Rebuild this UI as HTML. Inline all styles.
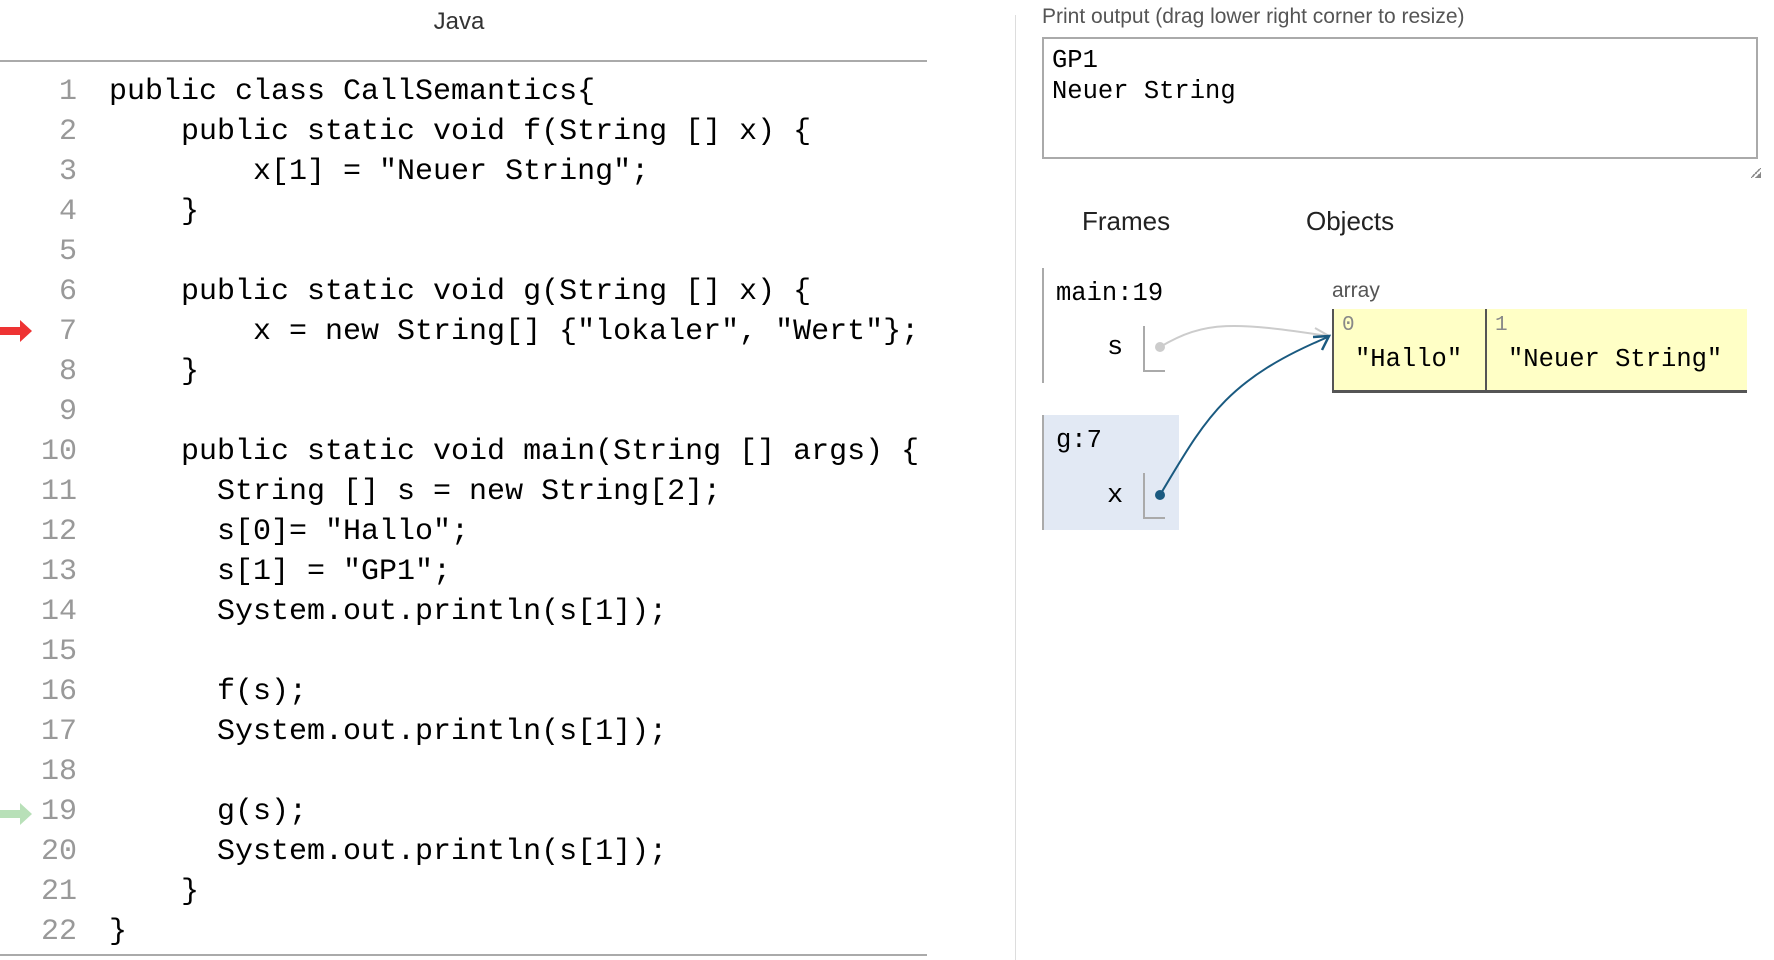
<!DOCTYPE html>
<html><head><meta charset="utf-8"><style>
body{margin:0;width:1774px;height:960px;background:#fff;position:relative;overflow:hidden;font-family:"Liberation Sans",sans-serif}
.a{position:absolute}
.code{position:absolute;left:0;top:72px;width:927px;font-family:"Liberation Mono",monospace;font-size:30px}
.ln{height:40px;line-height:40px;white-space:pre;position:relative}
.ln .n{position:absolute;left:17px;color:#999;width:60px;text-align:right}
.ln .t{position:absolute;left:109px;color:#000}
.mono{font-family:"Liberation Mono",monospace}
#r{position:absolute;left:-10px;top:0;width:1774px;height:960px}
</style></head><body>
<div class="a" style="left:0;width:918px;top:8px;text-align:center;font-size:24px;color:#333">Java</div>
<div class="a" style="left:0;top:60px;width:927px;height:2px;background:#aaa"></div>
<div class="a" style="left:0;top:954px;width:927px;height:2px;background:#aaa"></div>
<div class="a" style="left:1015px;top:15px;width:1px;height:945px;background:#ddd"></div>
<div class="code">
<div class="ln"><span class="n">1</span><span class="t">public class CallSemantics{</span></div>
<div class="ln"><span class="n">2</span><span class="t">    public static void f(String [] x) {</span></div>
<div class="ln"><span class="n">3</span><span class="t">        x[1] = "Neuer String";</span></div>
<div class="ln"><span class="n">4</span><span class="t">    }</span></div>
<div class="ln"><span class="n">5</span><span class="t"></span></div>
<div class="ln"><span class="n">6</span><span class="t">    public static void g(String [] x) {</span></div>
<div class="ln"><span class="n">7</span><span class="t">        x = new String[] {"lokaler", "Wert"};</span></div>
<div class="ln"><span class="n">8</span><span class="t">    }</span></div>
<div class="ln"><span class="n">9</span><span class="t"></span></div>
<div class="ln"><span class="n">10</span><span class="t">    public static void main(String [] args) {</span></div>
<div class="ln"><span class="n">11</span><span class="t">      String [] s = new String[2];</span></div>
<div class="ln"><span class="n">12</span><span class="t">      s[0]= "Hallo";</span></div>
<div class="ln"><span class="n">13</span><span class="t">      s[1] = "GP1";</span></div>
<div class="ln"><span class="n">14</span><span class="t">      System.out.println(s[1]);</span></div>
<div class="ln"><span class="n">15</span><span class="t"></span></div>
<div class="ln"><span class="n">16</span><span class="t">      f(s);</span></div>
<div class="ln"><span class="n">17</span><span class="t">      System.out.println(s[1]);</span></div>
<div class="ln"><span class="n">18</span><span class="t"></span></div>
<div class="ln"><span class="n">19</span><span class="t">      g(s);</span></div>
<div class="ln"><span class="n">20</span><span class="t">      System.out.println(s[1]);</span></div>
<div class="ln"><span class="n">21</span><span class="t">    }</span></div>
<div class="ln"><span class="n">22</span><span class="t">}</span></div>
</div>
<svg class="a" style="left:0;top:0" width="40" height="960">
<path d="M0 327h20v-7l12 11-12 11v-7H0z" fill="#e33"/>
<path d="M0 810h20v-7l12 11-12 11v-7H0z" fill="#b8e0b8"/>
</svg>
<div id="r">
<div class="a" style="left:1052px;top:5px;font-size:21px;color:#555">Print output (drag lower right corner to resize)</div>
<div class="a mono" style="left:1052px;top:37px;width:716px;height:122px;border:2px solid #aaa;font-size:25.5px;line-height:31px;padding:6px 0 0 8px;box-sizing:border-box">GP1<br>Neuer String</div>
<div class="a" style="left:1761px;top:168px;width:10px;height:10px;background:linear-gradient(135deg,transparent 45%,#888 45%,#888 55%,transparent 55%,transparent 70%,#888 70%)"></div>
<div class="a" style="left:1092px;top:206px;font-size:26px;color:#222">Frames</div>
<div class="a" style="left:1316px;top:206px;font-size:26px;color:#222">Objects</div>
<div class="a" style="left:1052px;top:268px;width:2px;height:115px;background:#aaa"></div>
<div class="a mono" style="left:1066px;top:279px;font-size:25.5px">main:19</div>
<div class="a mono" style="left:1117px;top:333px;font-size:27px">s</div>
<div class="a" style="left:1153px;top:326px;width:20px;height:44px;border-left:2px solid #aaa;border-bottom:2px solid #aaa"></div>
<div class="a" style="left:1052px;top:415px;width:137px;height:115px;background:#e2e9f4;border-left:2px solid #aaa;box-sizing:border-box"></div>
<div class="a mono" style="left:1066px;top:426px;font-size:25.5px">g:7</div>
<div class="a mono" style="left:1117px;top:481px;font-size:27px">x</div>
<div class="a" style="left:1153px;top:473px;width:20px;height:44px;border-left:2px solid #aaa;border-bottom:2px solid #aaa"></div>
<div class="a" style="left:1342px;top:279px;font-size:21px;color:#555">array</div>
<div class="a" style="left:1342px;top:309px;width:415px;height:84px;background:#ffffc6;border-left:2px solid #555;border-bottom:3px solid #555;box-sizing:border-box"></div>
<div class="a" style="left:1495px;top:309px;width:2px;height:84px;background:#555"></div>
<div class="a mono" style="left:1352px;top:314px;font-size:21px;color:#888">0</div>
<div class="a mono" style="left:1505px;top:314px;font-size:21px;color:#888">1</div>
<div class="a mono" style="left:1365px;top:345px;font-size:25.5px">"Hallo"</div>
<div class="a mono" style="left:1518px;top:345px;font-size:25.5px">"Neuer String"</div>
<svg class="a" style="left:5px;top:0" width="1774" height="960">
<path d="M1165 347 C1210 320 1240 322 1333 336" stroke="#ccc" stroke-width="2" fill="none"/>
<path d="M1320 328 L1334 336 L1320 343" stroke="#ccc" stroke-width="2" fill="none"/>
<circle cx="1165" cy="347" r="5" fill="#ccc"/>
<path d="M1165 495 C1210 420 1230 380 1333 337" stroke="#1a5a80" stroke-width="2" fill="none"/>
<path d="M1318 337 L1334 336 L1327 350" stroke="#1a5a80" stroke-width="2.5" fill="none"/>
<circle cx="1165" cy="495" r="5" fill="#1a5a80"/>
</svg>
</div>
</body></html>
